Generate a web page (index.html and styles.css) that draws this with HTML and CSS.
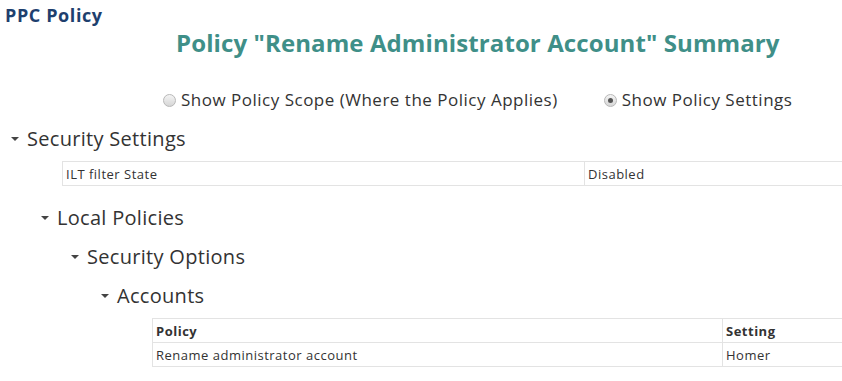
FILE: index.html
```html
<!DOCTYPE html>
<html lang="en">
<head>
    <meta charset="UTF-8">
    <title>PPC Policy</title>
    <link rel="stylesheet" href="styles.css">
</head>
<body>
    <div class="page">
        <div class="brand">PPC Policy</div>
        <h1 class="summary-title">Policy "Rename Administrator Account" Summary</h1>

        <div class="view-switch">
            <label class="radio"><span class="radio-dot"></span>Show Policy Scope (Where the Policy Applies)</label>
            <label class="radio"><span class="radio-dot checked"></span>Show Policy Settings</label>
        </div>

        <div class="section level-0">
            <h2 class="section-title"><span class="caret"></span>Security Settings</h2>
            <table class="settings-table filter-table">
                <tr>
                    <td>ILT filter State</td>
                    <td>Disabled</td>
                </tr>
            </table>

            <div class="section level-1">
                <h2 class="section-title"><span class="caret"></span>Local Policies</h2>

                <div class="section level-1">
                    <h2 class="section-title"><span class="caret"></span>Security Options</h2>

                    <div class="section level-1">
                        <h2 class="section-title"><span class="caret"></span>Accounts</h2>
                        <table class="settings-table accounts-table">
                            <tr>
                                <th>Policy</th>
                                <th>Setting</th>
                            </tr>
                            <tr>
                                <td>Rename administrator account</td>
                                <td>Homer</td>
                            </tr>
                        </table>
                    </div>
                </div>
            </div>
        </div>
    </div>
</body>
</html>
```

FILE: styles.css
```css
body {
    margin: 0;
    padding: 0;
    font-family: 'Open Sans', 'Noto Sans', sans-serif;
    color: #333333;
    background-color: #ffffff;
    overflow: hidden;
}

.page {
    width: 842px;
    overflow: hidden;
}

.brand {
    font-size: 18px;
    font-weight: bold;
    letter-spacing: 0.6px;
    color: #1e3f6e;
    padding: 3px 0 0 5px;
    line-height: 24px;
}

.summary-title {
    margin: 0;
    padding-left: 176px;
    font-size: 24px;
    font-weight: bold;
    letter-spacing: 0.1px;
    color: #3f8f88;
    line-height: 32px;
}

.view-switch {
    display: flex;
    gap: 46px;
    padding: 29px 0 0 163px;
    font-size: 17px;
    letter-spacing: 0.5px;
    line-height: 24px;
}

.radio {
    display: flex;
    align-items: center;
    gap: 5px;
}

.radio-dot {
    width: 11px;
    height: 11px;
    border-radius: 50%;
    border: 1px solid #b8b8b8;
    background: linear-gradient(#f4f4f4, #d6d6d6);
    position: relative;
}

.radio-dot.checked::after {
    content: "";
    position: absolute;
    left: 3px;
    top: 3px;
    width: 5px;
    height: 5px;
    border-radius: 50%;
    background-color: #555555;
}

.level-0 {
    padding-left: 11px;
    margin-top: 13px;
}

.level-1 {
    padding-left: 30px;
}

.section-title {
    margin: 0;
    display: flex;
    align-items: center;
    font-size: 20px;
    font-weight: normal;
    letter-spacing: 0.3px;
    line-height: 28px;
    color: #333333;
}

.level-1 > .section-title {
    margin-top: 11px;
}

.settings-table + .level-1 > .section-title {
    margin-top: 18px;
}

.caret {
    width: 0;
    height: 0;
    border-left: 4px solid transparent;
    border-right: 4px solid transparent;
    border-top: 4px solid #444444;
    margin-right: 8px;
}

.settings-table {
    border-collapse: collapse;
    font-size: 13px;
    letter-spacing: 0.5px;
    width: 840px;
    margin-top: 8px;
    margin-left: 51px;
}

.settings-table td,
.settings-table th {
    border: 1px solid #e3e3e3;
    padding: 0 3px;
    height: 23px;
    text-align: left;
    white-space: nowrap;
}

.settings-table th {
    font-weight: bold;
}

.filter-table td:first-child {
    width: 515px;
}

.accounts-table td:first-child,
.accounts-table th:first-child {
    width: 563px;
}
```
